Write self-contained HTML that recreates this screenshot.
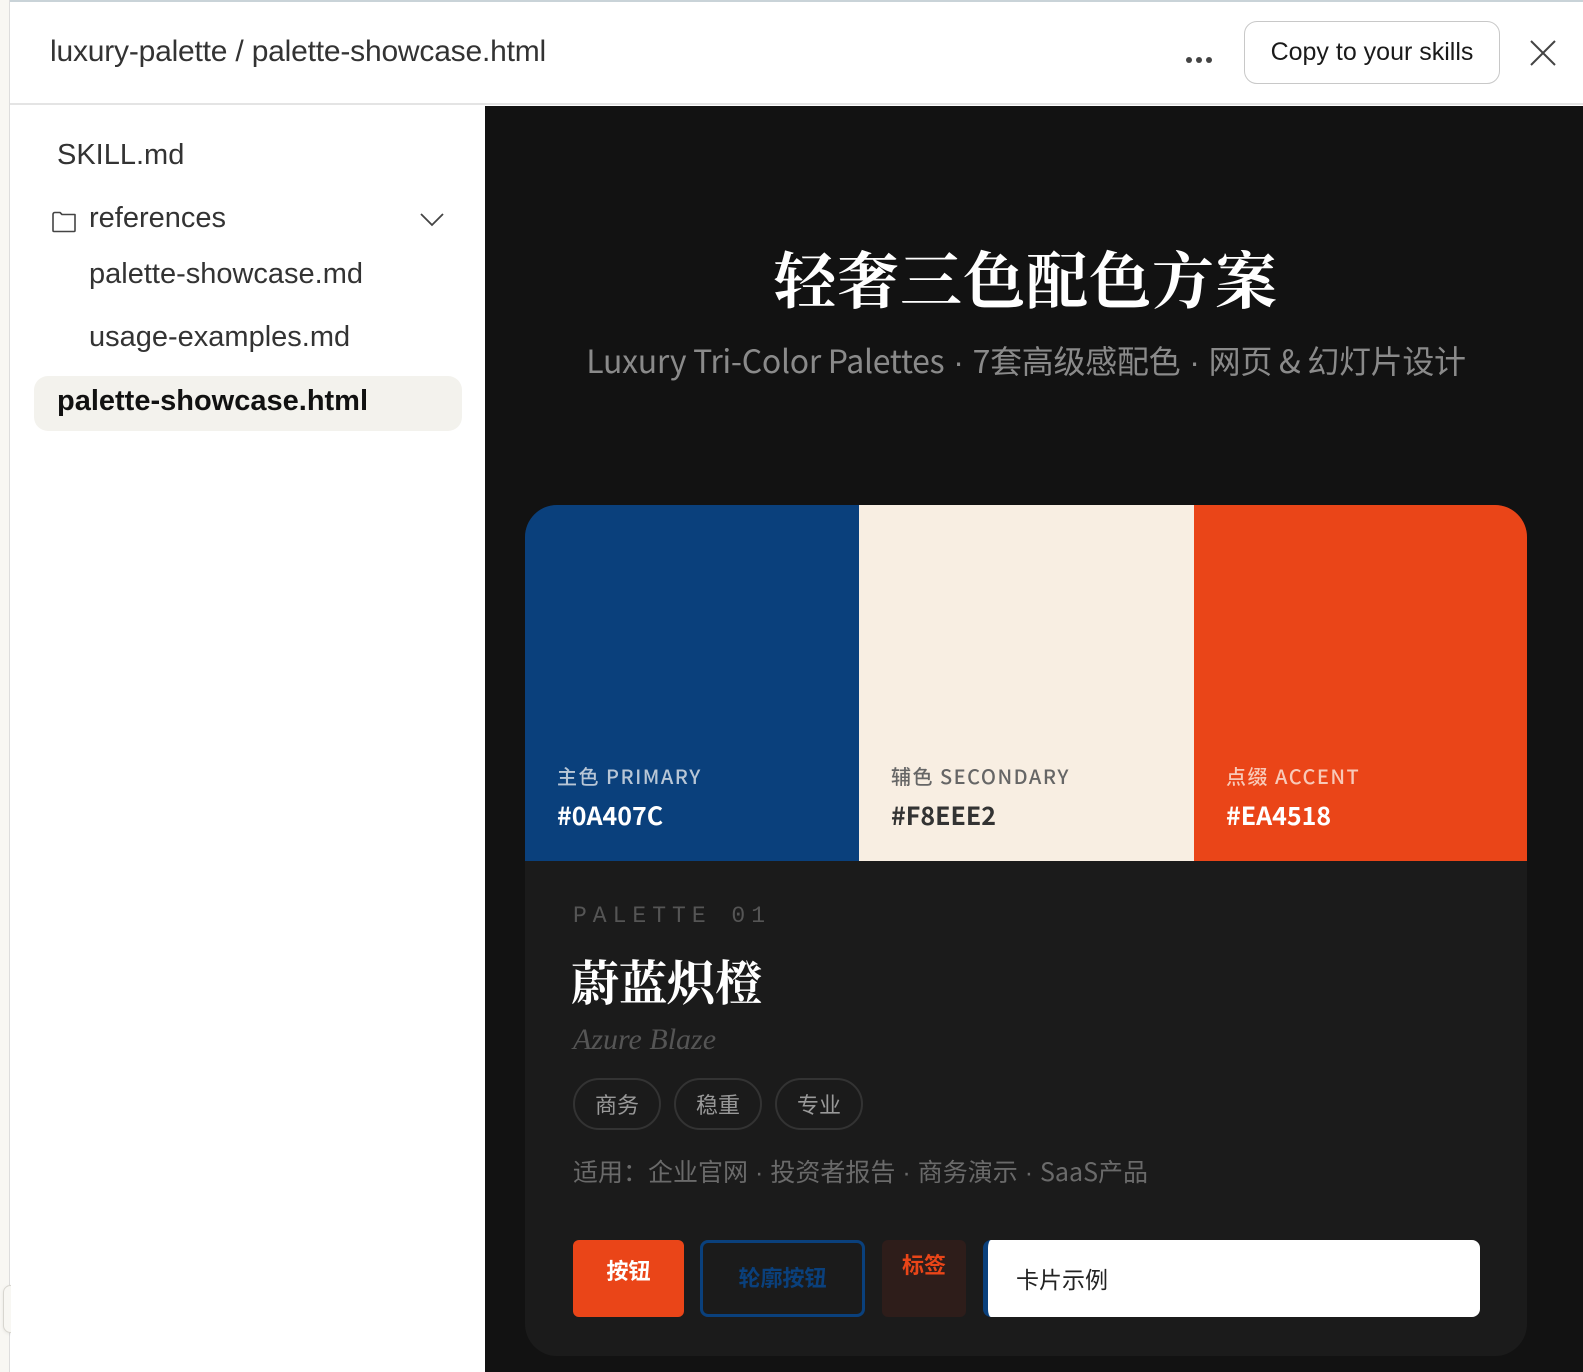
<!DOCTYPE html>
<html><head><meta charset="utf-8"><style>
*{margin:0;padding:0;box-sizing:border-box}
html,body{width:1583px;height:1372px;overflow:hidden;background:#fff;font-family:"Liberation Sans","Noto Sans CJK SC",sans-serif}
.topline{position:absolute;left:0;top:0;width:1583px;height:2px;background:#c9d3d8}
.lstrip{position:absolute;left:0;top:0;width:10px;height:1372px;background:#f8f7f3;border-right:1px solid #ddd}
.thumb{position:absolute;left:3px;top:1285px;width:15px;height:48px;border:1px solid #d8d6d0;border-radius:8px;background:#f8f7f3;box-shadow:0 1px 3px rgba(0,0,0,.08)}
.header{position:absolute;left:10px;top:2px;width:1573px;height:103px;border-bottom:2px solid #e4e4e4;background:#fff}
.crumb{position:absolute;left:40px;top:33px;font-size:30px;color:#333;letter-spacing:-.2px}
.dots{position:absolute;left:1176px;top:48px}
.dots i{display:inline-block;width:6px;height:6px;border-radius:3px;background:#444;margin-right:4px}
.copy{position:absolute;left:1234px;top:19px;width:256px;height:63px;border:1px solid #c8c8c8;border-radius:13px;font-size:25px;color:#1a1a1a;text-align:center;line-height:61px}
.x{position:absolute;left:1520px;top:38px}
.side{position:absolute;left:11px;top:106px;width:474px;height:1266px;background:#fff}
.side .it{position:absolute;font-size:29px;color:#333}
.sel{position:absolute;left:23px;top:270px;width:428px;height:55px;background:#f3f2ed;border-radius:14px}
.main{position:absolute;left:485px;top:106px;width:1098px;height:1266px;background:#121212}
h1{position:absolute;left:0;width:1082px;top:126px;text-align:center;font-family:"Noto Serif CJK SC",serif;font-size:62px;font-weight:700;color:#fff;letter-spacing:1px}
.sub{position:absolute;left:0;width:1082px;top:231px;text-align:center;font-family:"Noto Sans CJK SC",sans-serif;font-size:32px;color:#8a8a8a;letter-spacing:-.3px}
.d{font-family:"Liberation Sans",sans-serif;margin:0 9px}
.card{position:absolute;left:40px;top:399px;width:1002px;height:851px;background:#1b1b1b;border-radius:32px;overflow:hidden}
.sw{position:absolute;top:0;height:356px;width:334px}
.sw .lb{position:absolute;left:32px;top:256px;font-family:"Noto Sans CJK SC",sans-serif;font-size:20px;font-weight:500;letter-spacing:1.5px}
.sw .hx{position:absolute;left:32px;top:292px;font-family:"Noto Sans CJK SC",sans-serif;font-size:25px;font-weight:700}
.pal{position:absolute;left:48px;top:398px;font-family:"Liberation Mono",monospace;font-size:23px;letter-spacing:6px;color:#555}
.name{position:absolute;left:46px;top:440px;font-family:"Noto Serif CJK SC",serif;font-size:48px;font-weight:700;color:#fff}
.en{position:absolute;left:48px;top:518px;font-family:"Liberation Serif",serif;font-style:italic;font-size:30px;color:#555}
.tag{position:absolute;top:573px;height:52px;width:88px;border:2px solid #333;border-radius:26px;color:#999;font-family:"Noto Sans CJK SC",sans-serif;font-size:22px;text-align:center;line-height:48px}
.use{position:absolute;left:48px;top:648px;font-family:"Noto Sans CJK SC",sans-serif;font-size:25px;color:#6a6a6a}
.use .d{margin:0 7px}
.b1{position:absolute;left:48px;top:735px;width:111px;height:77px;background:#ea4518;border-radius:6px;color:#fff;font-family:"Noto Sans CJK SC",sans-serif;font-weight:700;font-size:22px;text-align:center;padding-top:14px}
.b2{position:absolute;left:175px;top:735px;width:165px;height:77px;border:3px solid #0a407c;border-radius:8px;color:#0a407c;font-family:"Noto Sans CJK SC",sans-serif;font-weight:700;font-size:22px;text-align:center;line-height:68px}
.b3{position:absolute;left:357px;top:735px;width:84px;height:77px;background:#2e1d1a;border-radius:6px;color:#ea4518;font-family:"Noto Sans CJK SC",sans-serif;font-weight:700;font-size:22px;text-align:center;padding-top:8px}
.b4{position:absolute;left:458px;top:735px;width:497px;height:77px;background:#fff;border-left:5px solid #0a407c;border-radius:8px;color:#222;font-family:"Noto Sans CJK SC",sans-serif;font-size:23px;padding-left:28px;line-height:77px}
</style></head><body>
<div class="topline"></div>
<div class="header">
  <div class="crumb">luxury-palette / palette-showcase.html</div>
  <div class="dots"><i></i><i></i><i></i></div>
  <div class="copy">Copy to your skills</div>
  <svg class="x" width="26" height="26" viewBox="0 0 26 26"><path d="M1 1L25 25M25 1L1 25" stroke="#444" stroke-width="2" fill="none"/></svg>
</div>
<div class="lstrip"></div>
<div class="thumb"></div>
<div class="side">
  <div class="it" style="left:46px;top:33px">SKILL.md</div>
  <svg style="position:absolute;left:40px;top:103px" width="26" height="24" viewBox="0 0 26 24"><path d="M2 5.5Q2 3.5 4 3.5H9L11 5.5H24V21.5Q24 22.5 23 22.5H3Q2 22.5 2 21.5Z" stroke="#444" stroke-width="1.6" fill="none" stroke-linejoin="round"/></svg>
  <div class="it" style="left:78px;top:96px">references</div>
  <svg style="position:absolute;left:409px;top:107px" width="24" height="14" viewBox="0 0 24 14"><path d="M1 1L12 12L23 1" stroke="#444" stroke-width="1.8" fill="none"/></svg>
  <div class="it" style="left:78px;top:152px">palette-showcase.md</div>
  <div class="it" style="left:78px;top:215px">usage-examples.md</div>
  <div class="sel"></div>
  <div class="it" style="left:46px;top:279px;color:#111;font-weight:700">palette-showcase.html</div>
</div>
<div class="main">
  <h1>轻奢三色配色方案</h1>
  <div class="sub">Luxury Tri-Color Palettes<span class="d">·</span>7套高级感配色<span class="d">·</span>网页 &amp; 幻灯片设计</div>
  <div class="card">
    <div class="sw" style="left:0;background:#0a407c"><div class="lb" style="color:#b8c6d6">主色 PRIMARY</div><div class="hx" style="color:#fff">#0A407C</div></div>
    <div class="sw" style="left:334px;width:335px;background:#f8eee2"><div class="lb" style="color:#666">辅色 SECONDARY</div><div class="hx" style="color:#333">#F8EEE2</div></div>
    <div class="sw" style="left:669px;width:333px;background:#ea4518"><div class="lb" style="color:#f8c9b8">点缀 ACCENT</div><div class="hx" style="color:#fff">#EA4518</div></div>
    <div class="pal">PALETTE 01</div>
    <div class="name">蔚蓝炽橙</div>
    <div class="en">Azure Blaze</div>
    <div class="tag" style="left:48px">商务</div>
    <div class="tag" style="left:149px">稳重</div>
    <div class="tag" style="left:250px">专业</div>
    <div class="use">适用：企业官网<span class="d">·</span>投资者报告<span class="d">·</span>商务演示<span class="d">·</span>SaaS产品</div>
    <div class="b1">按钮</div>
    <div class="b2">轮廓按钮</div>
    <div class="b3">标签</div>
    <div class="b4">卡片示例</div>
  </div>
</div>
</body></html>
